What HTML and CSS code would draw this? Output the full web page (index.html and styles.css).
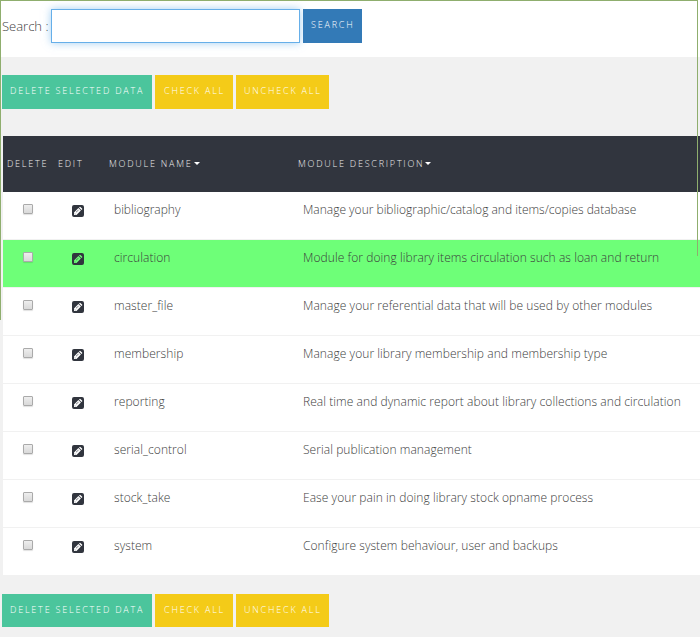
FILE: index.html
```html
<!DOCTYPE html>
<html lang="en">
<head>
<meta charset="utf-8">
<title>Modules</title>
<link rel="stylesheet" href="styles.css">
</head>
<body>
<svg width="0" height="0" class="defs"><symbol id="pen" viewBox="0 0 12 12"><path fill-rule="evenodd" d="M2 0h8a2 2 0 0 1 2 2v8a2 2 0 0 1-2 2H2a2 2 0 0 1-2-2V2a2 2 0 0 1 2-2ZM2 10H4.500L8.900 5.600 6.400 3.100 2 7.500ZM7 2.500 9.500 5 10.100 4.400Q10.500 4 10.100 3.600L8.400 1.900Q8 1.500 7.600 1.900ZM2.800 8.200 3.800 9.200H2.800ZM4 7.100 6.400 4.700 6.700 5 4.300 7.400Z"/></symbol></svg>
<div class="edge"></div><div class="edge-right"></div>
<form class="search">
<label for="q">Search :</label><input id="q" class="field" type="text"><button type="button" class="btn blue">Search</button>
</form>
<div class="actions top"><button class="btn green">Delete Selected Data</button><button class="btn yellow check">Check All</button><button class="btn yellow uncheck">Uncheck All</button></div>
<main class="table">
<div class="row head"><span>Delete</span><span>Edit</span><span>Module Name<i class="caret"></i></span><span>Module Description<i class="caret"></i></span></div>
<div class="row first"><i class="box"></i><svg class="pen"><use href="#pen"/></svg><span>bibliography</span><span>Manage your bibliographic/catalog and items/copies database</span></div>
<div class="row active"><i class="box"></i><svg class="pen"><use href="#pen"/></svg><span>circulation</span><span>Module for doing library items circulation such as loan and return</span></div>
<div class="row"><i class="box"></i><svg class="pen"><use href="#pen"/></svg><span>master_file</span><span>Manage your referential data that will be used by other modules</span></div>
<div class="row"><i class="box"></i><svg class="pen"><use href="#pen"/></svg><span>membership</span><span>Manage your library membership and membership type</span></div>
<div class="row"><i class="box"></i><svg class="pen"><use href="#pen"/></svg><span>reporting</span><span>Real time and dynamic report about library collections and circulation</span></div>
<div class="row"><i class="box"></i><svg class="pen"><use href="#pen"/></svg><span>serial_control</span><span>Serial publication management</span></div>
<div class="row"><i class="box"></i><svg class="pen"><use href="#pen"/></svg><span>stock_take</span><span>Ease your pain in doing library stock opname process</span></div>
<div class="row"><i class="box"></i><svg class="pen"><use href="#pen"/></svg><span>system</span><span>Configure system behaviour, user and backups</span></div>
</main>
<div class="actions bottom"><button class="btn green">Delete Selected Data</button><button class="btn yellow check">Check All</button><button class="btn yellow uncheck">Uncheck All</button></div>
</body>
</html>
```
FILE: styles.css
```css
* { box-sizing: border-box; }
body { margin: 0; height: 637px; overflow: hidden; background: #f1f1f1; color: #3c3c3c; font: 300 12px/18px "Open Sans", sans-serif; }
.defs { position: absolute; }
.edge { position: absolute; z-index: 2; left: 0; top: 0; width: 698px; height: 320px; border: solid #8fae6e; border-width: 1px 0 0 1px; }
.edge-right { position: absolute; z-index: 2; left: 697px; top: 0; width: 1px; height: 256px; background: #8fae6e; }
.search { display: flex; height: 57px; background: #fff; padding: 9px 0 0 2px; }
.search label { width: 49px; font-size: 13px; line-height: 34px; white-space: nowrap; }
.field { width: 249px; height: 34px; border: 1px solid #66afe9; margin: 0 3px 0 0; padding: 0; outline: none; box-shadow: 0 0 8px rgba(102, 175, 233, .6); }
.btn { height: 34px; border: 0; padding: 0 0 3px 8px; font: 300 9px/18px "Open Sans", sans-serif; letter-spacing: 1.8px; text-transform: uppercase; text-align: left; white-space: nowrap; color: #fff; }
.blue { width: 59px; background: #337ab7; }
.green { width: 150px; background: #4bc59c; }
.yellow { background: #f4cb18; }
.check { width: 78px; padding-left: 9px; }
.uncheck { width: 93px; }
.actions { display: flex; gap: 3px; padding-left: 2px; }
.top { padding-top: 18px; height: 79px; }
.bottom { padding-top: 18px; }
.bottom .btn { height: 33px; padding-bottom: 2px; }
.table { margin-left: 3px; }
.row { display: grid; grid-template-columns: 51px 60px 189px 1fr; height: 48px; padding-top: 9px; background: #fff; border-bottom: 1px solid #f1f1f1; letter-spacing: .065px; white-space: nowrap; }
.first { letter-spacing: 0; }
.head { grid-template-columns: 51px 51px 189px 1fr; height: 56px; padding: 19px 0 0 4px; background: #31353e; border: 0; color: #eee; font-size: 9px; letter-spacing: 1.77px; text-transform: uppercase; }
.active { background: #6eff78; }
.box { width: 10px; height: 10px; margin: 3px 0 0 20px; border: 1px solid #aaa; border-radius: 1px; background: linear-gradient(#eee, #d9d9d9); box-shadow: 0 1px 1px rgba(0, 0, 0, .12); }
.pen { width: 12px; height: 12px; margin: 4px 0 0 18px; fill: #31353e; }
.caret { display: inline-block; margin-left: 1px; border: 3px solid transparent; border-top-color: #fff; border-bottom: 0; vertical-align: 2px; }
```
